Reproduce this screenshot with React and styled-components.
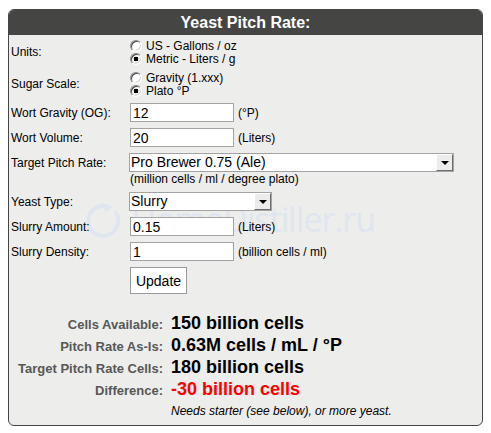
import React from 'react';
import styled, { createGlobalStyle } from 'styled-components';

const GlobalStyle = createGlobalStyle`
  body {
    margin: 9px 8px;
    background: #ffffff;
    font-family: "Liberation Sans", Arial, sans-serif;
    color: #000;
  }
`;

/* Panel with dark title bar */

const Panel = styled.section`
  position: relative;
  width: 473px;
  border: 1px solid #454644;
  border-radius: 6px;
  background: #ededeb;
  overflow: hidden;
  padding-bottom: 6px;
`;

const Title = styled.h2`
  margin: 0;
  height: 25px;
  line-height: 25px;
  background: #454644;
  color: #fff;
  font-size: 16px;
  font-weight: bold;
  text-align: center;
`;

const Watermark = styled.div`
  position: absolute;
  left: 74px;
  top: 189px;
  display: flex;
  align-items: center;
  gap: 8px;
  color: #dfe6ef;
  font-family: "Open Sans", sans-serif;
  font-size: 34px;
  letter-spacing: -1px;
  line-height: 40px;
  pointer-events: none;
  z-index: 0;
`;

const Content = styled.div`
  position: relative;
  z-index: 1;
`;

/* Form table */

const Form = styled.div`
  display: grid;
  grid-template-columns: 117px 1fr;
  gap: 2px;
  padding-top: 2px;
`;

const Label = styled.div`
  display: flex;
  align-items: ${(p) => (p.$top ? 'flex-start' : 'center')};
  padding: ${(p) => (p.$top ? '5px 2px 2px' : '2px')};
  font-size: 12px;
  line-height: 14px;
`;

const Field = styled.div`
  display: flex;
  flex-direction: ${(p) => (p.$column ? 'column' : 'row')};
  align-items: ${(p) => (p.$column ? 'flex-start' : 'center')};
  padding: 2px;
  font-size: 12px;
`;

const RadioLine = styled.label`
  display: flex;
  align-items: center;
  height: 13px;
  gap: 4px;
  font-size: 12px;
`;

const Radio = styled.input.attrs({ type: 'radio' })`
  appearance: none;
  margin: 0;
  width: 12px;
  height: 12px;
  border-radius: 50%;
  border: 1px solid;
  border-color: #8a8a8a #ffffff #ffffff #8a8a8a;
  box-shadow: inset 1px 1px 0 #4a4a4a, inset -1px -1px 0 #d8d8d4;
  background: #fff;
  &:checked {
    background: radial-gradient(circle, #000 0 2.2px, #fff 2.6px);
  }
`;

const TextInput = styled.input`
  box-sizing: border-box;
  width: 104px;
  height: 19px;
  margin: 0;
  padding: 0 2px;
  border: 1px solid #a3a3a3;
  background: #fff;
  font-family: "Liberation Sans", Arial, sans-serif;
  font-size: 14px;
  color: #000;
  outline: none;
`;

const Unit = styled.span`
  margin-left: 4px;
  font-size: 12px;
`;

const SelectBox = styled.div`
  position: relative;
  box-sizing: border-box;
  width: ${(p) => p.$width}px;
  height: 19px;
  margin-left: -1px;
  border: 1px solid #a3a3a3;
  background: #fff;
`;

const Select = styled.select`
  appearance: none;
  width: 100%;
  height: 17px;
  margin: 0;
  padding: 0 0 0 1px;
  border: 0;
  background: transparent;
  font-family: "Liberation Sans", Arial, sans-serif;
  font-size: 14px;
  line-height: 17px;
  color: #000;
  outline: none;
`;

const ArrowButton = styled.span`
  position: absolute;
  top: 0;
  right: 0;
  box-sizing: border-box;
  width: 17px;
  height: 17px;
  display: flex;
  align-items: center;
  justify-content: center;
  background: #ececec;
  border: 1px solid;
  border-color: #ffffff #6e6e6e #6e6e6e #ffffff;
  pointer-events: none;
  &::after {
    content: '';
    border-left: 4px solid transparent;
    border-right: 4px solid transparent;
    border-top: 4px solid #000;
  }
`;

const Hint = styled.span`
  font-size: 12px;
  line-height: 14px;
`;

const Button = styled.button`
  box-sizing: border-box;
  width: 57px;
  height: 27px;
  margin: 0;
  padding: 0;
  border: 1px solid #9a9a9a;
  background: #fff;
  font-family: "Liberation Sans", Arial, sans-serif;
  font-size: 14px;
  color: #000;
`;

/* Results */

const Results = styled.div`
  display: grid;
  grid-template-columns: 154px 1fr;
  column-gap: 8px;
  align-items: baseline;
  margin-top: 16px;
`;

const ResultLabel = styled.div`
  text-align: right;
  font-size: 13px;
  font-weight: bold;
  color: #575757;
  line-height: 13px;
`;

const ResultValue = styled.div`
  font-size: 18px;
  font-weight: bold;
  line-height: 22px;
  color: ${(p) => (p.$red ? '#ff0000' : '#000')};
`;

const Note = styled.div`
  grid-column: 2;
  margin-top: 3px;
  font-size: 12px;
  font-style: italic;
  line-height: 16px;
`;

const Logo = () => (
  <svg width="40" height="40" viewBox="0 0 40 40" fill="none">
    <path
      d="M26 8 A15 15 0 1 0 33 14"
      stroke="#dfe6ef"
      strokeWidth="4"
      strokeLinecap="round"
    />
    <path d="M20 4 L30 8 L22 14 Z" fill="#dfe6ef" />
  </svg>
);

const results = [
  { label: 'Cells Available:', value: '150 billion cells' },
  { label: 'Pitch Rate As-Is:', value: '0.63M cells / mL / °P' },
  { label: 'Target Pitch Rate Cells:', value: '180 billion cells' },
  { label: 'Difference:', value: '-30 billion cells', red: true },
];

export default function App() {
  return (
    <>
      <GlobalStyle />
      <Panel>
        <Title>Yeast Pitch Rate:</Title>
        <Watermark>
          <Logo />
          <span>HomeDistiller.ru</span>
        </Watermark>
        <Content>
          <Form>
            <Label>Units:</Label>
            <Field $column>
              <RadioLine>
                <Radio name="units" /> US - Gallons / oz
              </RadioLine>
              <RadioLine>
                <Radio name="units" defaultChecked /> Metric - Liters / g
              </RadioLine>
            </Field>

            <Label>Sugar Scale:</Label>
            <Field $column>
              <RadioLine>
                <Radio name="scale" /> Gravity (1.xxx)
              </RadioLine>
              <RadioLine>
                <Radio name="scale" defaultChecked /> Plato °P
              </RadioLine>
            </Field>

            <Label>Wort Gravity (OG):</Label>
            <Field>
              <TextInput defaultValue="12" />
              <Unit>(°P)</Unit>
            </Field>

            <Label>Wort Volume:</Label>
            <Field>
              <TextInput defaultValue="20" />
              <Unit>(Liters)</Unit>
            </Field>

            <Label $top>Target Pitch Rate:</Label>
            <Field $column>
              <SelectBox $width={325}>
                <Select defaultValue="0.75">
                  <option value="0.75">Pro Brewer 0.75 (Ale)</option>
                </Select>
                <ArrowButton />
              </SelectBox>
              <Hint>(million cells / ml / degree plato)</Hint>
            </Field>

            <Label>Yeast Type:</Label>
            <Field>
              <SelectBox $width={143}>
                <Select defaultValue="slurry">
                  <option value="slurry">Slurry</option>
                </Select>
                <ArrowButton />
              </SelectBox>
            </Field>

            <Label>Slurry Amount:</Label>
            <Field>
              <TextInput defaultValue="0.15" />
              <Unit>(Liters)</Unit>
            </Field>

            <Label>Slurry Density:</Label>
            <Field>
              <TextInput defaultValue="1" />
              <Unit>(billion cells / ml)</Unit>
            </Field>

            <Label />
            <Field>
              <Button type="button">Update</Button>
            </Field>
          </Form>

          <Results>
            {results.map((r) => (
              <React.Fragment key={r.label}>
                <ResultLabel>{r.label}</ResultLabel>
                <ResultValue $red={r.red}>{r.value}</ResultValue>
              </React.Fragment>
            ))}
            <Note>Needs starter (see below), or more yeast.</Note>
          </Results>
        </Content>
      </Panel>
    </>
  );
}
